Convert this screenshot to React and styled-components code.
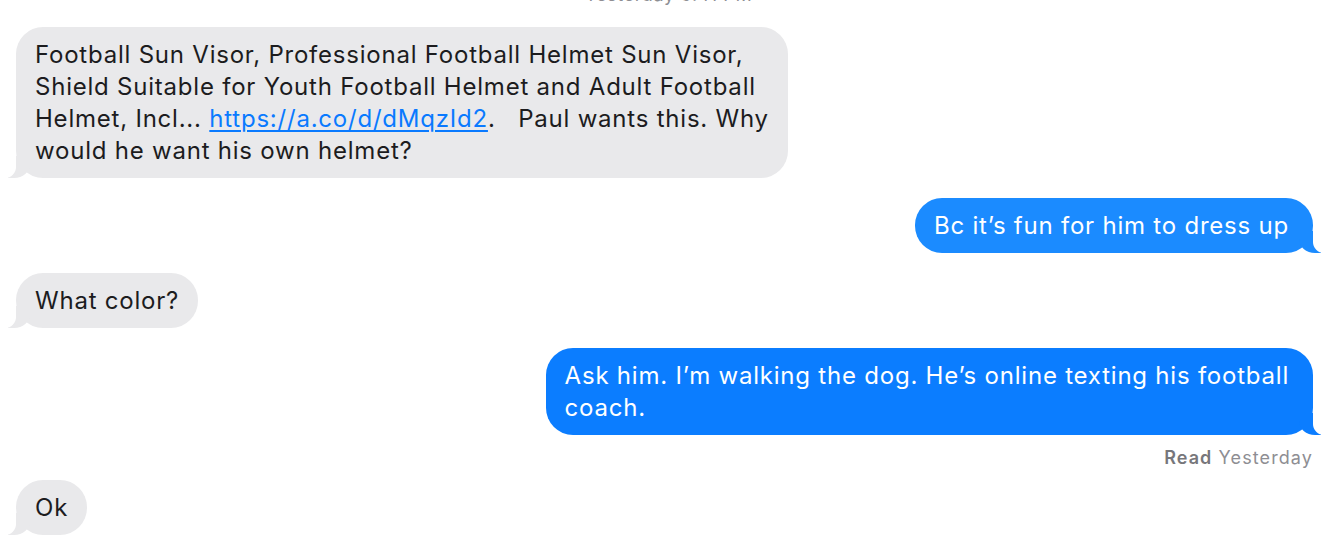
import React from "react";
import styled, { createGlobalStyle, css } from "styled-components";

const Global = createGlobalStyle`
  html, body { margin: 0; padding: 0; background: #ffffff; }
  body { font-family: Inter, "Noto Sans", "Liberation Sans", sans-serif; -webkit-font-smoothing: antialiased; overflow: hidden; }
`;

const Thread = styled.div`
  display: flex;
  flex-direction: column;
  padding: 0 15px 0 16px;
  height: 550px;
  box-sizing: border-box;
  overflow: hidden;
`;

const Stamp = styled.div`
  align-self: center;
  margin-top: -15px;
  margin-bottom: 22px;
  font-size: 18px;
  line-height: 20px;
  letter-spacing: 0.6px;
  color: #8e8e93;
  padding-left: 8px;
`;

const Row = styled.div`
  display: flex;
  justify-content: ${(p) => (p.$me ? "flex-end" : "flex-start")};
  margin-bottom: ${(p) => p.$gap ?? 20}px;
`;

const Bubble = styled.div`
  position: relative;
  box-sizing: border-box;
  padding: 11.5px 19px 11.5px 19px;
  border-radius: 27px;
  font-size: 24px;
  line-height: 32px;
  letter-spacing: 0.78px;
  white-space: nowrap;
  ${(p) =>
    p.$me
      ? css`
          background: ${p.$bg || "#0a7cff"};
          color: #ffffff;
          padding-right: 24px;
          &::before {
            content: "";
            position: absolute;
            bottom: 0;
            right: -8px;
            width: 22px;
            height: 22px;
            background: ${p.$bg || "#0a7cff"};
            border-bottom-left-radius: 16px 14px;
          }
          &::after {
            content: "";
            position: absolute;
            bottom: 0;
            right: -27px;
            width: 27px;
            height: 22px;
            background: #ffffff;
            border-bottom-left-radius: 11px;
          }
        `
      : css`
          background: #e9e9eb;
          color: #1c1c1e;
          &::before {
            content: "";
            position: absolute;
            bottom: 0;
            left: -8px;
            width: 22px;
            height: 22px;
            background: #e9e9eb;
            border-bottom-right-radius: 16px 14px;
          }
          &::after {
            content: "";
            position: absolute;
            bottom: 0;
            left: -27px;
            width: 27px;
            height: 22px;
            background: #ffffff;
            border-bottom-right-radius: 11px;
          }
        `}
`;

const Text = styled.span`
  position: relative;
  z-index: 1;
`;

const Link = styled.a`
  color: #0a7aff;
  text-decoration: underline;
  text-underline-offset: 3px;
  text-decoration-thickness: 1.5px;
`;

const Receipt = styled.div`
  align-self: flex-end;
  margin: -8px 0 11px 0;
  font-size: 18px;
  line-height: 22px;
  letter-spacing: 1.1px;
  color: #8e8e93;
  b {
    font-weight: 600;
    color: #77777b;
  }
`;

export default function App() {
  return (
    <>
      <Global />
      <Thread>
        <Stamp>Yesterday 6:41 PM</Stamp>
        <Row>
          <Bubble>
            <Text>
              Football Sun Visor, Professional Football Helmet Sun Visor,
              <br />
              Shield Suitable for Youth Football Helmet and Adult Football
              <br />
              Helmet, Incl... <Link href="#">https://a.co/d/dMqzId2</Link>.&nbsp;&nbsp; Paul wants this. Why
              <br />
              would he want his own helmet?
            </Text>
          </Bubble>
        </Row>
        <Row $me>
          <Bubble $me $bg="#1b8bff">
            <Text>Bc it’s fun for him to dress up</Text>
          </Bubble>
        </Row>
        <Row>
          <Bubble>
            <Text>What color?</Text>
          </Bubble>
        </Row>
        <Row $me>
          <Bubble $me $bg="#0b7dff">
            <Text>
              Ask him. I’m walking the dog. He’s online texting his football
              <br />
              coach.
            </Text>
          </Bubble>
        </Row>
        <Receipt>
          <b>Read</b> Yesterday
        </Receipt>
        <Row>
          <Bubble>
            <Text>Ok</Text>
          </Bubble>
        </Row>
      </Thread>
    </>
  );
}
